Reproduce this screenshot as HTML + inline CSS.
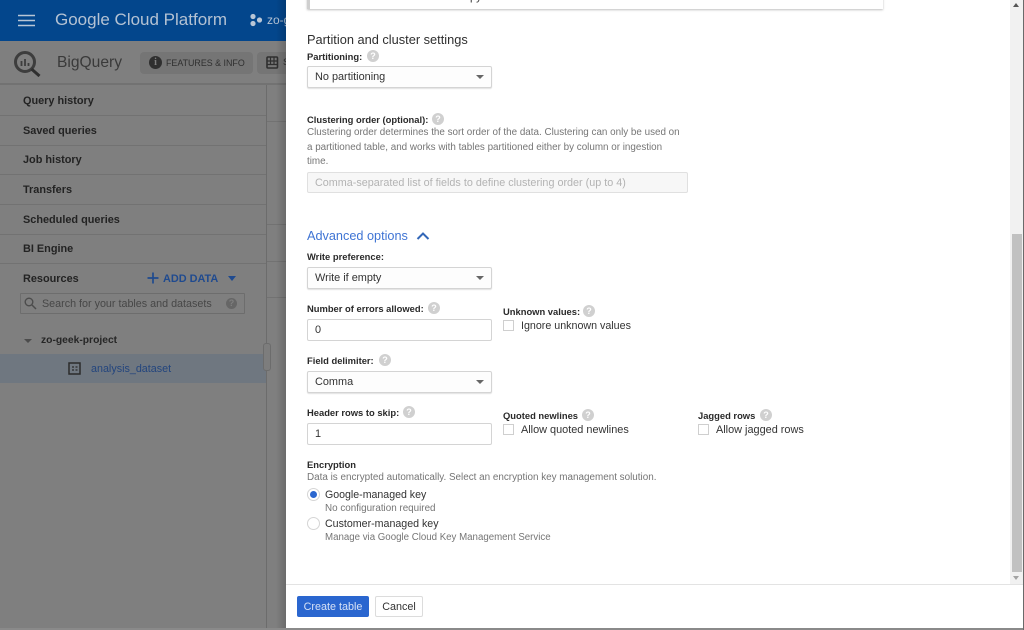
<!DOCTYPE html>
<html><head><meta charset="utf-8"><style>
*{box-sizing:border-box}
html,body{margin:0;padding:0;width:1024px;height:630px;overflow:hidden;background:#7f7f7f;font-family:"Liberation Sans",sans-serif}
#w{position:absolute;left:0;top:0;width:1024px;height:630px;overflow:hidden;filter:blur(.35px)}
.a{position:absolute;white-space:nowrap}
.side{font-size:10.9px;font-weight:bold;color:#232323;left:23px;line-height:14px;transform:translateY(1px)}
.ln{position:absolute;left:0;width:266px;height:1px;background:#727272}
.lb{font-size:9.4px;font-weight:bold;color:#2a2a2a;line-height:12px;transform:translateY(1px)}
.tx{font-size:10.8px;color:#333;line-height:14px;transform:translateY(1px)}
.gr{font-size:9.85px;color:#757575;line-height:14px;transform:translateY(1px)}
.q{position:absolute;width:12px;height:12px;border-radius:50%;background:#d0d0d0;color:#fff;font-size:9px;font-weight:bold;line-height:12px;text-align:center}
.box{position:absolute;left:307px;width:185px;height:22px;background:#fff;border:1px solid #d4d4d4;border-radius:2px;font-size:10.9px;color:#333;line-height:20px;padding-left:7px}
.sel{box-shadow:0 1px 1px rgba(0,0,0,.12);background:#fdfdfd}
.sel:after{content:"";position:absolute;right:7px;top:8px;border:4px solid transparent;border-top:4px solid #666;border-bottom:0}
.cb{position:absolute;width:11px;height:11px;border:1px solid #cfcfcf;background:#fff}
</style></head><body><div id="w">

<div class="a" style="left:0;top:0;width:286px;height:41px;background:#03468c"></div>
<svg class="a" style="left:18px;top:14px" width="18" height="13"><path d="M0 1.500h17M0 6.500h17M0 11.500h17" stroke="#b9c6d6" stroke-width="1.600"/></svg>
<div class="a" style="left:55px;top:10px;font-size:17px;line-height:20px;color:#b4c2d3">Google Cloud Platform</div>
<svg class="a" style="left:249px;top:13px" width="14" height="14"><circle cx="4" cy="3.500" r="2.600" fill="#b9c6d6"/><circle cx="4" cy="10.500" r="2.600" fill="#b9c6d6"/><circle cx="10.500" cy="7" r="2.600" fill="#b9c6d6"/></svg>
<div class="a" style="left:267px;top:13px;font-size:12px;line-height:14px;color:#b4c2d3">zo-g</div>

<div class="a" style="left:0;top:41px;width:286px;height:44px;background:#7f7f7f;border-bottom:2px solid #727272"></div>
<svg class="a" style="left:13px;top:49px" width="28" height="28" fill="none"><circle cx="12" cy="13" r="9.500" stroke="#3d3d3d" stroke-width="3"/><path d="M18.500 20l8 7" stroke="#2f2f2f" stroke-width="3"/><path d="M8.500 12v5M12 10v7M15.500 14v3" stroke="#3d3d3d" stroke-width="1.800"/></svg>
<div class="a" style="left:57px;top:53px;font-size:15.600px;line-height:20px;color:#3a3a3a">BigQuery</div>
<div class="a" style="left:140px;top:52px;width:113px;height:22px;border-radius:4px;background:#757575"></div>
<div class="a" style="left:149px;top:56px;width:13px;height:13px;border-radius:50%;background:#2f2f2f;color:#7f7f7f;font:bold 10px/13px 'Liberation Serif',serif;text-align:center">i</div>
<div class="a" style="left:166px;top:57px;font-size:8.900px;line-height:12px;color:#2f2f2f">FEATURES &amp; INFO</div>
<div class="a" style="left:257px;top:52px;width:29px;height:22px;border-radius:4px 0 0 4px;background:#757575"></div>
<svg class="a" style="left:266px;top:56px" width="13" height="13"><rect x="1" y="1" width="10.500" height="11" rx="1" fill="none" stroke="#2f2f2f" stroke-width="1.600"/><path d="M1 5h11M1 8.500h11M4.500 1v8M8 1v8" stroke="#2f2f2f" stroke-width="1.200"/></svg>
<div class="a" style="left:283px;top:57px;font-size:9.500px;line-height:12px;color:#2f2f2f">S</div>

<div class="a" style="left:266px;top:85px;width:1px;height:543px;background:#6c6c6c"></div>
<div class="a" style="left:267px;top:121px;width:19px;height:1px;background:#727272"></div>
<div class="a" style="left:267px;top:224px;width:19px;height:1px;background:#727272"></div>
<div class="a" style="left:267px;top:261px;width:19px;height:1px;background:#727272"></div>
<div class="a" style="left:267px;top:297px;width:19px;height:1px;background:#727272"></div>

<div class="ln" style="top:115px"></div><div class="ln" style="top:145px"></div><div class="ln" style="top:174px"></div><div class="ln" style="top:204px"></div><div class="ln" style="top:234px"></div><div class="ln" style="top:263px"></div>
<div class="a side" style="top:93px">Query history</div>
<div class="a side" style="top:123px">Saved queries</div>
<div class="a side" style="top:152px">Job history</div>
<div class="a side" style="top:182px">Transfers</div>
<div class="a side" style="top:212px">Scheduled queries</div>
<div class="a side" style="top:241px">BI Engine</div>
<div class="a side" style="top:271px">Resources</div>

<svg class="a" style="left:147px;top:272px" width="12" height="12"><path d="M6 .5v11M.5 6h11" stroke="#1f4a8f" stroke-width="1.700"/></svg>
<div class="a" style="left:163px;top:272px;font-size:10.900px;font-weight:bold;line-height:14px;color:#1f4a8f">ADD DATA</div>
<div class="a" style="left:228px;top:276px;border:4.500px solid transparent;border-top:5px solid #1f4a8f;border-bottom:0"></div>

<div class="a" style="left:20px;top:293px;width:225px;height:21px;border:1px solid #6d6d6d;border-radius:1px"></div>
<svg class="a" style="left:24px;top:297px" width="13" height="13" fill="none"><circle cx="5" cy="5" r="3.800" stroke="#4c4c4c" stroke-width="1.400"/><path d="M8 8l4 4" stroke="#4c4c4c" stroke-width="1.500"/></svg>
<div class="a" style="left:42px;top:297px;font-size:10.750px;line-height:14px;color:#474747">Search for your tables and datasets</div>
<div class="a" style="left:226px;top:298px;width:11px;height:11px;border-radius:50%;background:#666;color:#7f7f7f;font:bold 9px/11px 'Liberation Sans',sans-serif;text-align:center">?</div>

<div class="a" style="left:24px;top:339px;border:4px solid transparent;border-top:4px solid #4c4c4c;border-bottom:0"></div>
<div class="a" style="left:41px;top:334px;font-size:10.300px;font-weight:bold;line-height:14px;color:#262626">zo-geek-project</div>
<div class="a" style="left:0;top:354px;width:266px;height:29px;background:#6f7780"></div>
<svg class="a" style="left:68px;top:362px" width="13" height="13"><rect x="1" y="1" width="11" height="11" fill="none" stroke="#2b2b2b" stroke-width="1.500"/><path d="M4 5h2M7.500 5h2M4 8h2M7.500 8h2" stroke="#2b2b2b" stroke-width="1.200"/></svg>
<div class="a" style="left:91px;top:362px;font-size:10.750px;line-height:14px;color:#23457d">analysis_dataset</div>
<div class="a" style="left:263px;top:343px;width:8px;height:28px;border:1px solid #6c6c6c;border-radius:3px;background:#7d7d7d"></div>

<div class="a" style="left:276px;top:0;width:10px;height:628px;background:linear-gradient(90deg,rgba(0,0,0,0),rgba(0,0,0,.16))"></div>
<div class="a" style="left:0;top:628px;width:1024px;height:2px;background:#8a8a8a"></div>

<div class="a" style="left:286px;top:0;width:737px;height:628px;background:#fff"></div>
<div class="a" style="left:1023px;top:0;width:1px;height:630px;background:#6a6a6a"></div>

<div class="a" style="left:1010px;top:0;width:13px;height:584px;background:#f1f1f1"></div>
<div class="a" style="left:1012px;top:234px;width:10px;height:338px;background:#c1c1c1"></div>
<div class="a" style="left:1013px;top:3px;border:3.500px solid transparent;border-bottom:4px solid #555;border-top:0"></div>
<div class="a" style="left:1013px;top:576px;border:3.500px solid transparent;border-top:4px solid #a3a3a3;border-bottom:0"></div>

<div class="a" style="left:307px;top:-10px;width:576px;height:19px;background:#fff;border-left:3px solid #cfcfcf;box-shadow:0 1px 2px rgba(0,0,0,.25)"></div>
<div class="a" style="left:470px;top:-10px;font-size:11px;line-height:14px;color:#333">py</div>

<div class="a" style="left:307px;top:32px;font-size:12.800px;line-height:16px;color:#2f2f2f">Partition and cluster settings</div>
<div class="a lb" style="left:307px;top:50px">Partitioning:</div><div class="q" style="left:367px;top:50px">?</div>
<div class="box sel" style="top:66px">No partitioning</div>

<div class="a lb" style="left:307px;top:113px">Clustering order (optional):</div><div class="q" style="left:432px;top:113px">?</div>
<div class="a gr" style="left:307px;top:125px">Clustering order determines the sort order of the data. Clustering can only be used on</div>
<div class="a gr" style="left:307px;top:140px">a partitioned table, and works with tables partitioned either by column or ingestion</div>
<div class="a gr" style="left:307px;top:154px">time.</div>
<div class="a" style="left:307px;top:172px;width:381px;height:21px;background:#f7f7f7;border:1px solid #e0e0e0;border-radius:2px;font-size:10.800px;line-height:20px;padding-left:7px;color:#b3b3b3">Comma-separated list of fields to define clustering order (up to 4)</div>

<div class="a" style="left:307px;top:229px;font-size:12.700px;line-height:15px;color:#3f74d4">Advanced options</div>
<svg class="a" style="left:416px;top:231px" width="14" height="10" fill="none"><path d="M1.500 8l5.500-5.500L12.500 8" stroke="#3367b8" stroke-width="2"/></svg>

<div class="a lb" style="left:307px;top:250px">Write preference:</div>
<div class="box sel" style="top:267px">Write if empty</div>

<div class="a lb" style="left:307px;top:302px">Number of errors allowed:</div><div class="q" style="left:428px;top:302px">?</div>
<div class="box" style="top:319px">0</div>
<div class="a lb" style="left:503px;top:305px">Unknown values:</div><div class="q" style="left:583px;top:305px">?</div>
<div class="cb" style="left:503px;top:320px"></div>
<div class="a tx" style="left:521px;top:318px;font-size:10.700px">Ignore unknown values</div>

<div class="a lb" style="left:307px;top:354px">Field delimiter:</div><div class="q" style="left:379px;top:354px">?</div>
<div class="box sel" style="top:371px">Comma</div>

<div class="a lb" style="left:307px;top:406px">Header rows to skip:</div><div class="q" style="left:403px;top:406px">?</div>
<div class="box" style="top:423px">1</div>
<div class="a lb" style="left:503px;top:409px">Quoted newlines</div><div class="q" style="left:582px;top:409px">?</div>
<div class="cb" style="left:503px;top:424px"></div>
<div class="a tx" style="left:521px;top:422px;font-size:10.900px">Allow quoted newlines</div>
<div class="a lb" style="left:698px;top:409px">Jagged rows</div><div class="q" style="left:760px;top:409px">?</div>
<div class="cb" style="left:698px;top:424px"></div>
<div class="a tx" style="left:716px;top:422px;font-size:10.900px">Allow jagged rows</div>

<div class="a lb" style="left:307px;top:458px">Encryption</div>
<div class="a gr" style="left:307px;top:470px;font-size:9.900px">Data is encrypted automatically. Select an encryption key management solution.</div>
<div class="a" style="left:307px;top:488px;width:13px;height:13px;border-radius:50%;border:1px solid #d5d5d5;background:#fff"></div>
<div class="a" style="left:310px;top:491px;width:7px;height:7px;border-radius:50%;background:#2a66cf"></div>
<div class="a tx" style="left:325px;top:487px;font-size:10.600px">Google-managed key</div>
<div class="a gr" style="left:325px;top:501px">No configuration required</div>
<div class="a" style="left:307px;top:517px;width:13px;height:13px;border-radius:50%;border:1px solid #d5d5d5;background:#fff"></div>
<div class="a tx" style="left:325px;top:516px;font-size:10.650px">Customer-managed key</div>
<div class="a gr" style="left:325px;top:530px;font-size:9.700px">Manage via Google Cloud Key Management Service</div>

<div class="a" style="left:286px;top:584px;width:737px;height:1px;background:#e3e3e3"></div>
<div class="a" style="left:297px;top:596px;width:72px;height:21px;background:#2a66cf;border-radius:2px;color:#d7e2f6;font-size:10.800px;line-height:22px;text-align:center">Create table</div>
<div class="a" style="left:375px;top:596px;width:48px;height:21px;background:#fff;border:1px solid #dcdcdc;border-radius:2px;color:#333;font-size:10.800px;line-height:20px;text-align:center">Cancel</div>

</div></body></html>
